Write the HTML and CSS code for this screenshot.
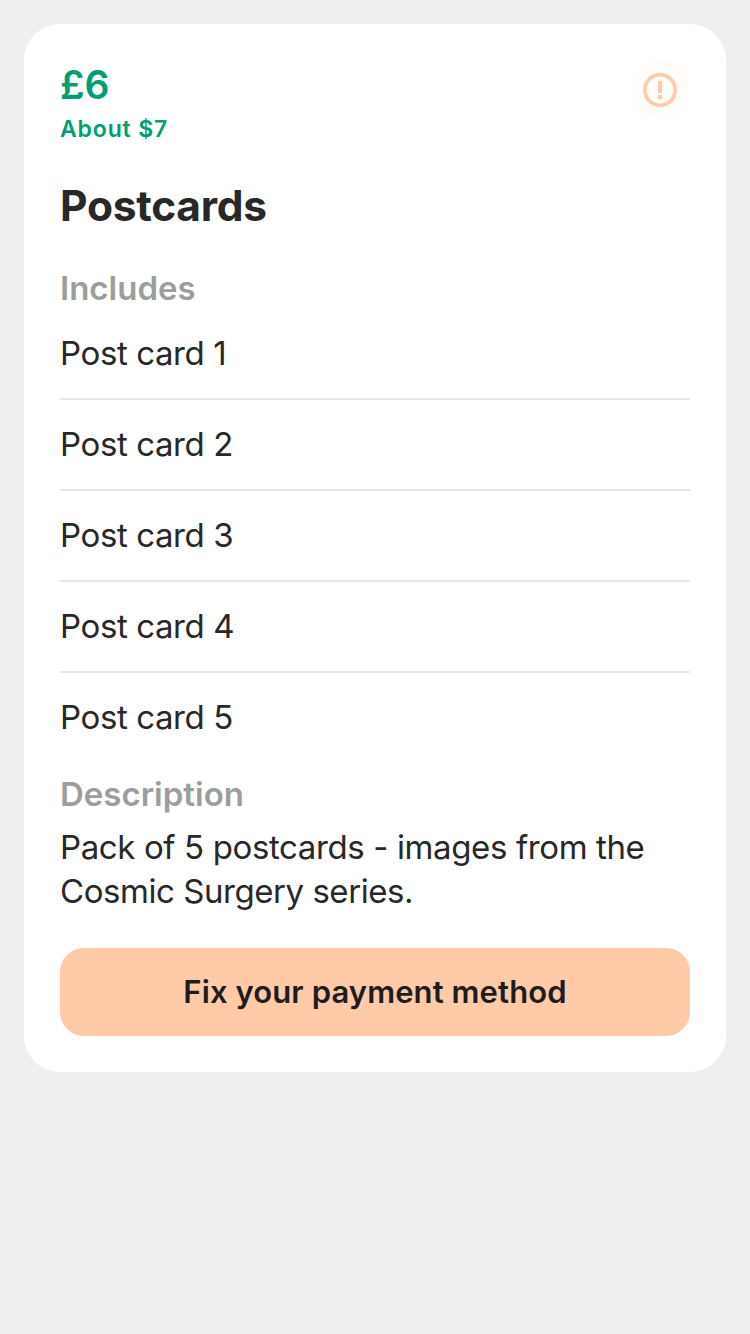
FILE: index.html
```html
<!DOCTYPE html>
<html lang="en">
<head>
<meta charset="utf-8">
<title>Postcards</title>
<link rel="stylesheet" href="styles.css">
</head>
<body>
<main class="card">
  <header class="header">
    <div class="pricing">
      <div class="price"><span>£6</span></div>
      <div class="about"><span>About $7</span></div>
    </div>
    <svg class="alert" viewBox="0 0 60 60" role="img" aria-label="Payment issue">
      <circle cx="30" cy="30" r="30" fill="#fffcfa"/>
      <circle cx="30" cy="30" r="15.2" fill="none" stroke="#ffcaa8" stroke-width="3.6"/>
      <rect x="28" y="21" width="4" height="12" rx="0.6" fill="#ffcaa8"/>
      <circle cx="30" cy="37.2" r="2.4" fill="#ffcaa8"/>
    </svg>
  </header>
  <h1 class="title"><span>Postcards</span></h1>
  <h2 class="label includes"><span>Includes</span></h2>
  <ul class="items">
    <li class="item"><span>Post card 1</span></li>
    <li class="item"><span>Post card 2</span></li>
    <li class="item"><span>Post card 3</span></li>
    <li class="item"><span>Post card 4</span></li>
    <li class="item"><span>Post card 5</span></li>
  </ul>
  <h2 class="label description"><span>Description</span></h2>
  <p class="copy"><span class="line-one">Pack of 5 postcards - images from the</span><br><span class="line-two">Cosmic Surgery series.</span></p>
  <button class="fix"><span>Fix your payment method</span></button>
</main>
</body>
</html>
```

FILE: styles.css
```css
* { box-sizing: border-box; }
body {
  margin: 0;
  min-height: 1334px;
  padding: 24px;
  background: #efefef;
  color: #282828;
  font-family: Inter, "Liberation Sans", sans-serif;
}
.card {
  height: 1048px;
  padding: 36px;
  border-radius: 36px;
  background: #fff;
}
.header { display: flex; justify-content: space-between; height: 84px; }
.price {
  height: 50px;
  line-height: 50px;
  color: #009e74;
  font-size: 39px;
  font-weight: 600;
}
.about {
  margin-top: 4px;
  line-height: 30px;
  color: #009e74;
  font-size: 23px;
  font-weight: 600;
  letter-spacing: 0.85px;
}
.alert { width: 60px; height: 60px; }
.title {
  margin: 36px 0 0;
  line-height: 52px;
  font-size: 42.5px;
  font-weight: 700;
  letter-spacing: -0.25px;
}
.label {
  margin: 0;
  line-height: 44px;
  color: #9b9e9c;
  font-size: 33px;
  font-weight: 600;
}
.includes { margin-top: 34px; }
.items { margin: 0; padding: 0; list-style: none; }
.item {
  height: 91px;
  padding-top: 22px;
  border-top: 2px solid #e6e6e6;
  line-height: 44px;
  font-size: 33px;
  letter-spacing: -0.4px;
}
.item:first-child { height: 88px; padding-top: 21px; border-top: 0; }
.item:last-child { height: 90px; }
.description { margin-top: 11px; }
.copy {
  margin: 9px 0 0;
  line-height: 44px;
  font-size: 33px;
  letter-spacing: -0.38px;
}
.line-two { letter-spacing: -0.45px; }
.fix {
  display: block;
  width: 100%;
  height: 88px;
  margin: 35px 0 0;
  padding: 0;
  border: 0;
  border-radius: 24px;
  background: #ffcaa8;
  color: #1d1d1f;
  font: 600 31px/44px Inter, "Liberation Sans", sans-serif;
  letter-spacing: 0.1px;
}
```
